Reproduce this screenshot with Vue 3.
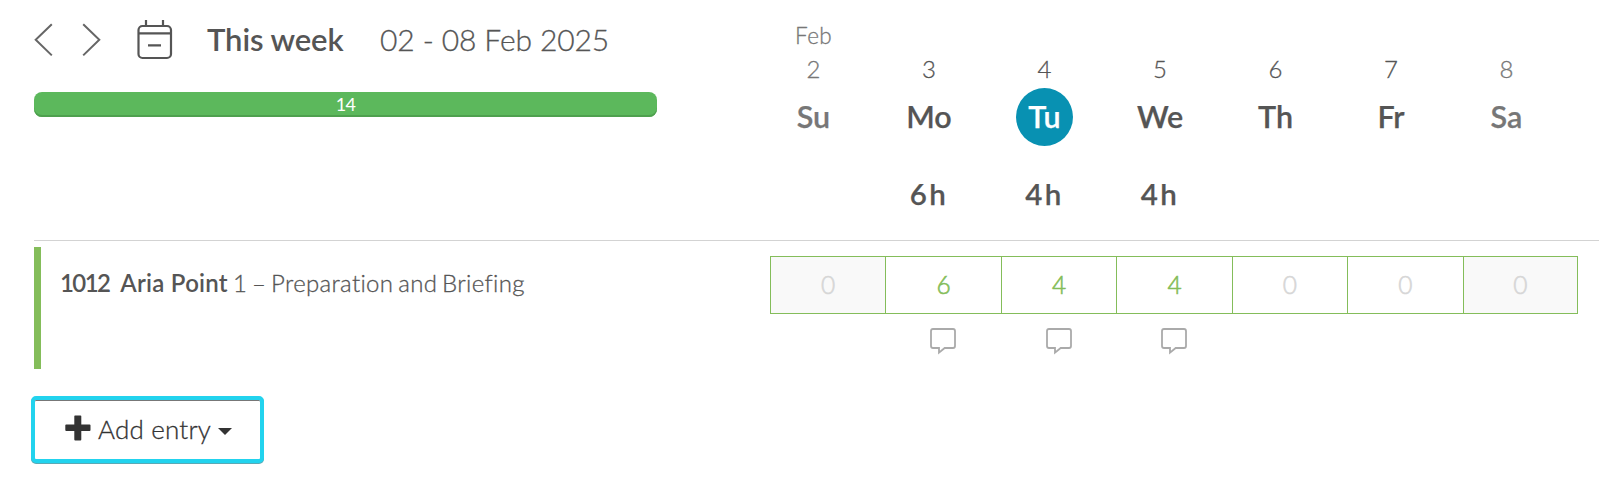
<template>
  <main class="timesheet">
    <header class="header">
      <div class="period">
        <div class="toolbar">
          <button class="icon-btn prev" aria-label="Previous week">
            <svg width="20" height="34" viewBox="0 0 20 34">
              <path d="M17.8 1.2 L1.7 16.8 L17.8 32.4" />
            </svg>
          </button>
          <button class="icon-btn next" aria-label="Next week">
            <svg width="20" height="34" viewBox="0 0 20 34">
              <path d="M1.2 1.2 L17.3 16.8 L1.2 32.4" />
            </svg>
          </button>
          <button class="icon-btn calendar" aria-label="Pick a date">
            <svg width="36" height="40" viewBox="0 0 36 40">
              <rect x="1.5" y="6" width="32.5" height="32" rx="4" />
              <path d="M1.5 13.3 H34 M9 0 V6 M26 0 V6 M11 25.4 H24" />
            </svg>
          </button>
          <strong class="week">This week</strong>
          <span class="range">02 - 08 Feb 2025</span>
        </div>
        <div class="progress">{{ total }}</div>
      </div>

      <div class="days">
        <div
          v-for="day in days"
          :key="day.date"
          class="day"
          :class="{ weekend: day.weekend, today: day.today }"
        >
          <span class="month">{{ day.month }}</span>
          <span class="date">{{ day.date }}</span>
          <span class="name">{{ day.name }}</span>
          <span class="sum">{{ day.hours ? day.hours + 'h' : '' }}</span>
        </div>
      </div>
    </header>

    <section class="entry">
      <p class="title">
        <b class="code">1012</b> <b class="project">Aria Point</b> <span class="task">1 – Preparation and Briefing</span>
      </p>
      <div class="cells">
        <div v-for="day in days" :key="day.date" class="slot">
          <div class="cell" :class="{ weekend: day.weekend, filled: day.hours }">
            {{ day.hours }}
          </div>
          <svg v-if="day.hours" class="comment" width="26" height="27" viewBox="0 0 26 27">
            <path d="M3 1 H23 Q25 1 25 3 V18 Q25 20 23 20 H14.7 L9 24.6 V20 H3 Q1 20 1 18 V3 Q1 1 3 1 Z" />
          </svg>
        </div>
      </div>
    </section>

    <button class="add">
      <svg class="plus" width="26" height="26" viewBox="0 0 26 26">
        <path d="M10 0.5 H15.5 Q16.3 0.5 16.3 1.3 V9.4 H24.6 Q25.5 9.4 25.5 10.3 V15 Q25.5 16 24.6 16 H16.3 V24.5 Q16.3 25.5 15.4 25.5 H10.2 Q9.3 25.5 9.3 24.5 V16 H1.2 Q0.3 16 0.3 15 V10.3 Q0.3 9.4 1.2 9.4 H9.3 V1.3 Q9.3 0.5 10 0.5 Z" />
      </svg>
      <span class="add-label">Add entry</span>
      <span class="caret"></span>
    </button>
  </main>
</template>

<script setup>
import { computed, ref } from 'vue'

const days = ref([
  { month: 'Feb', date: 2, name: 'Su', hours: 0, weekend: true },
  { date: 3, name: 'Mo', hours: 6 },
  { date: 4, name: 'Tu', hours: 4, today: true },
  { date: 5, name: 'We', hours: 4 },
  { date: 6, name: 'Th', hours: 0 },
  { date: 7, name: 'Fr', hours: 0 },
  { date: 8, name: 'Sa', hours: 0, weekend: true }
])

const total = computed(() => days.value.reduce((sum, d) => sum + d.hours, 0))
</script>

<style>
body {
  background: #fff;
}
</style>

<style scoped>
.timesheet {
  box-sizing: border-box;
  height: 489px;
  padding-left: 34px;
  overflow: hidden;
  color: #555;
  font-family: Lato, 'Open Sans', sans-serif;
  font-weight: 300;
}

button {
  font: inherit;
  cursor: pointer;
}

.header {
  display: flex;
  box-sizing: border-box;
  height: 241px;
  border-bottom: 1px solid #d3d3d3;
}

.period {
  width: 721.75px;
  flex: none;
}

.toolbar {
  display: flex;
  align-items: center;
  height: 79px;
}

.icon-btn {
  display: block;
  padding: 0;
  border: 0;
  background: none;
}

.icon-btn svg {
  display: block;
  fill: none;
  stroke: #666;
  stroke-width: 2;
}

.next {
  margin-left: 28px;
}

.calendar {
  margin-left: 35px;
}

.calendar svg {
  stroke: #555;
  stroke-width: 2.2;
}

.week {
  margin: -2px 0 0 34px;
  width: 173px;
  font-size: 31px;
  font-weight: 600;
  letter-spacing: -0.1px;
  white-space: nowrap;
}

.range {
  margin-top: -2px;
  font-size: 30px;
  letter-spacing: -0.1px;
  white-space: nowrap;
}

.range,
.month,
.date,
.task,
.cell,
.add-label {
  -webkit-text-stroke: 0.3px currentColor;
}

.progress {
  box-sizing: border-box;
  width: 623px;
  height: 25px;
  margin-top: 13px;
  border-radius: 8px;
  background: #5cb85c;
  box-shadow: inset 0 -2px 0 #4ea04e;
  color: #fff;
  font-size: 18px;
  font-weight: 400;
  letter-spacing: -0.8px;
  line-height: 25px;
  text-align: center;
}

.days {
  display: flex;
  padding-top: 17px;
}

.day {
  display: flex;
  flex-direction: column;
  align-items: center;
  width: 115.5px;
}

.day.weekend {
  color: #777;
}

.month {
  height: 35px;
  font-size: 22.5px;
  letter-spacing: 0.3px;
  line-height: 37px;
}

.date {
  height: 36px;
  font-size: 24px;
  line-height: 34px;
}

.name {
  width: 57px;
  height: 58px;
  border-radius: 50%;
  font-size: 30.5px;
  font-weight: 600;
  line-height: 57px;
  text-align: center;
  -webkit-text-stroke: 0.25px currentColor;
}

.today .name {
  background: #0891b2;
  color: #fff;
}

.sum {
  margin-top: 28px;
  font-size: 29.5px;
  font-weight: 600;
  letter-spacing: 2.3px;
  line-height: 39px;
  -webkit-text-stroke: 0.25px currentColor;
}

.entry {
  display: flex;
  box-sizing: border-box;
  height: 122px;
  margin-top: 6px;
  border-left: 7px solid #84bd5a;
}

.title {
  box-sizing: border-box;
  flex: none;
  width: 729px;
  margin: 0;
  padding: 18px 0 0 19px;
  font-size: 24px;
  line-height: 36px;
  white-space: nowrap;
}

.title b {
  font-weight: 600;
}

.code {
  margin-right: 4.5px;
  letter-spacing: -1.6px;
}

.project {
  margin-right: -1.5px;
  letter-spacing: 0.25px;
}

.task {
  letter-spacing: 0.33px;
  word-spacing: -2px;
}

.cells {
  display: flex;
  box-sizing: border-box;
  width: 808px;
  padding-top: 9px;
}

.slot {
  display: flex;
  flex: none;
  flex-direction: column;
  align-items: center;
  width: 115.45px;
}

.slot:last-child {
  width: 115.3px;
}

.cell {
  box-sizing: border-box;
  width: 100%;
  height: 58px;
  border: 1px solid #84bd5a;
  border-right: 0;
  color: #d6d6d6;
  font-size: 24.5px;
  line-height: 56px;
  text-align: center;
  -webkit-text-stroke-width: 0.6px;
}

.slot:last-child .cell {
  border-right: 1px solid #84bd5a;
}

.cell.weekend {
  background: #f9f9f9;
}

.cell.filled {
  color: #84bd5a;
}

.comment {
  margin-top: 14px;
  fill: none;
  stroke: #aaa;
  stroke-width: 1.8;
}

.add {
  display: flex;
  align-items: center;
  box-sizing: border-box;
  width: 233px;
  height: 67px;
  margin: 27px 0 0 -3px;
  padding: 0 0 1px 30px;
  border: 4px solid #22d3ee;
  border-radius: 5px;
  background: #fff;
  box-shadow: inset 0 1px 0 #777, 0 1px 0 #5aa9b5;
  color: #333;
}

.plus {
  fill: #333;
  margin-bottom: 3px;
}

.add-label {
  width: 120px;
  margin-left: 7px;
  font-size: 26px;
  letter-spacing: 0.2px;
  text-align: left;
  white-space: nowrap;
}

.caret {
  margin-top: 5px;
  border: 7px solid transparent;
  border-top-color: #333;
  border-bottom: 0;
}
</style>
